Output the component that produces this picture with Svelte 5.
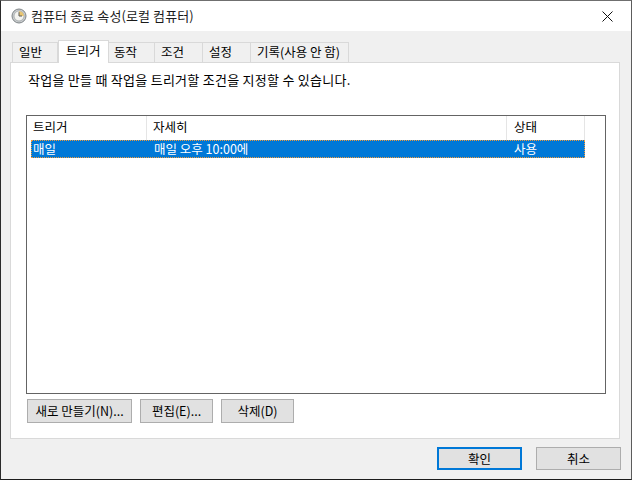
<script lang="ts">
  const tabs = [
    { label: '일반', width: 46 },
    { label: '트리거', width: 51, active: true },
    { label: '동작', width: 46 },
    { label: '조건', width: 48 },
    { label: '설정', width: 48 },
    { label: '기록(사용 안 함)', width: 98 }
  ];
  const actions = [
    { label: '새로 만들기(N)...', width: 105 },
    { label: '편집(E)...', width: 73 },
    { label: '삭제(D)', width: 73 }
  ];
</script>

<div class="window">
  <header class="titlebar">
    <svg class="clock" width="16" height="16" viewBox="0 0 16 16">
      <circle cx="8" cy="8" r="7" fill="#c9ccce" stroke="#7f8588" />
      <circle cx="8" cy="8" r="5" fill="#f4f4f0" stroke="#9a9fa2" stroke-width="0.7" />
      <path d="M8 3.2A4.8 4.8 0 0 1 12.8 8H8Z" fill="#e9c672" />
      <path d="M8 4.2V8H11" fill="none" stroke="#5c5c5c" stroke-width="1" />
    </svg>
    <span class="title">컴퓨터 종료 속성(로컬 컴퓨터)</span>
    <svg class="close" width="11" height="11" viewBox="0 0 11 11">
      <path d="M0.5 0.5L10.5 10.5M10.5 0.5L0.5 10.5" stroke="#111" stroke-width="1" fill="none" />
    </svg>
  </header>

  <div class="body">
    <nav class="tabs">
      {#each tabs as tab}
        <div class="tab" class:active={tab.active} style="width: {tab.width}px">{tab.label}</div>
      {/each}
    </nav>

    <section class="panel">
      <p class="hint">작업을 만들 때 작업을 트리거할 조건을 지정할 수 있습니다.</p>

      <div class="list">
        <div class="row head">
          <span class="cell">트리거</span>
          <span class="cell">자세히</span>
          <span class="cell">상태</span>
        </div>
        <div class="row selected">
          <span class="cell">매일</span>
          <span class="cell">매일 오후 10:00에</span>
          <span class="cell">사용</span>
        </div>
      </div>

      <div class="actions">
        {#each actions as action}
          <button style="width: {action.width}px">{action.label}</button>
        {/each}
      </div>
    </section>

    <footer class="footer">
      <button class="dialog primary">확인</button>
      <button class="dialog">취소</button>
    </footer>
  </div>
</div>

<style>
  :global(body) {
    margin: 0;
    background: #f0f0f0;
  }

  .window {
    box-sizing: border-box;
    width: 632px;
    height: 480px;
    display: flex;
    flex-direction: column;
    border-top: 1px solid #6f6f6f;
    border-left: 1px solid #2a2a2a;
    border-right: 1px solid #5c5c5c;
    border-bottom: 1px solid #1c1c1c;
    background: #f0f0f0;
    font-family: "Noto Sans CJK KR", "Liberation Sans", sans-serif;
    font-size: 12.5px;
    color: #000;
  }

  .titlebar {
    height: 30px;
    flex: none;
    display: flex;
    align-items: center;
    padding: 0 12px 0 10px;
    background: #fff;
  }

  .clock {
    margin-right: 4px;
  }

  .title {
    flex: 1;
    font-size: 13px;
    letter-spacing: 0.1px;
    margin-top: -1px;
    color: #1a1a1a;
  }

  .close {
    margin-right: 6px;
  }

  .body {
    flex: 1;
    display: flex;
    flex-direction: column;
    padding: 10px 11px 0 9px;
  }

  .tabs {
    display: flex;
    height: 22px;
    padding-left: 2px;
    margin-bottom: -1px;
    align-items: flex-end;
    position: relative;
    z-index: 1;
  }

  .tab {
    box-sizing: border-box;
    height: 20px;
    margin-bottom: 1px;
    padding-left: 6px;
    background: #f0f0f0;
    border: 1px solid #d9d9d9;
    border-left-width: 0;
    border-bottom-width: 0;
    line-height: 18px;
    white-space: nowrap;
  }

  .tab:first-child {
    border-left-width: 1px;
    padding-left: 6px;
  }

  .tab:nth-child(3) {
    padding-left: 5px;
  }

  .tab.active {
    height: 23px;
    margin-bottom: 0;
    padding-left: 7px;
    padding-top: 1px;
    background: #fff;
    border-left-width: 1px;
  }

  .panel {
    box-sizing: border-box;
    height: 377px;
    flex: none;
    display: flex;
    flex-direction: column;
    background: #fff;
    border: 1px solid #d9d9d9;
    padding: 0 13px 0 15px;
  }

  .hint {
    margin: 8px 0 0 2px;
    height: 18px;
    line-height: 18px;
    font-size: 13px;
    letter-spacing: 0.26px;
    white-space: nowrap;
  }

  .list {
    box-sizing: border-box;
    height: 279px;
    margin-top: 26px;
    border: 1px solid #646464;
    background: #fff;
  }

  .row {
    display: grid;
    grid-template-columns: 120px 360px 78px;
  }

  .head {
    height: 24px;
    align-items: center;
  }

  .head .cell {
    height: 24px;
    line-height: 21px;
    border-right: 1px solid #e5e5e5;
  }

  .head .cell:first-child,
  .head .cell:nth-child(2) {
    padding-left: 6px;
  }

  .head .cell:nth-child(3) {
    padding-left: 7px;
  }

  .selected {
    box-sizing: border-box;
    height: 18px;
    margin-left: 4px;
    width: 554px;
    grid-template-columns: 120px 360px 74px;
    background: #0078d7;
    color: #fff;
    outline: 1px dotted #f09a3a;
    outline-offset: -1px;
    line-height: 17px;
  }

  .selected .cell:first-child {
    padding-left: 2px;
  }

  .selected .cell:nth-child(2),
  .selected .cell:nth-child(3) {
    padding-left: 3px;
  }

  .cell {
    box-sizing: border-box;
    white-space: nowrap;
  }

  .actions {
    display: flex;
    gap: 8px;
    margin: 5px 0 0 1px;
  }

  button {
    box-sizing: border-box;
    height: 24px;
    padding: 0;
    background: #e1e1e1;
    border: 1px solid #adadad;
    font: inherit;
    line-height: 20px;
    color: #000;
  }

  .footer {
    display: flex;
    justify-content: flex-end;
    gap: 14px;
    margin-top: 8px;
    margin-right: -1px;
  }

  .dialog {
    width: 85px;
    height: 23px;
  }

  .primary {
    border: 2px solid #0078d7;
  }
</style>
